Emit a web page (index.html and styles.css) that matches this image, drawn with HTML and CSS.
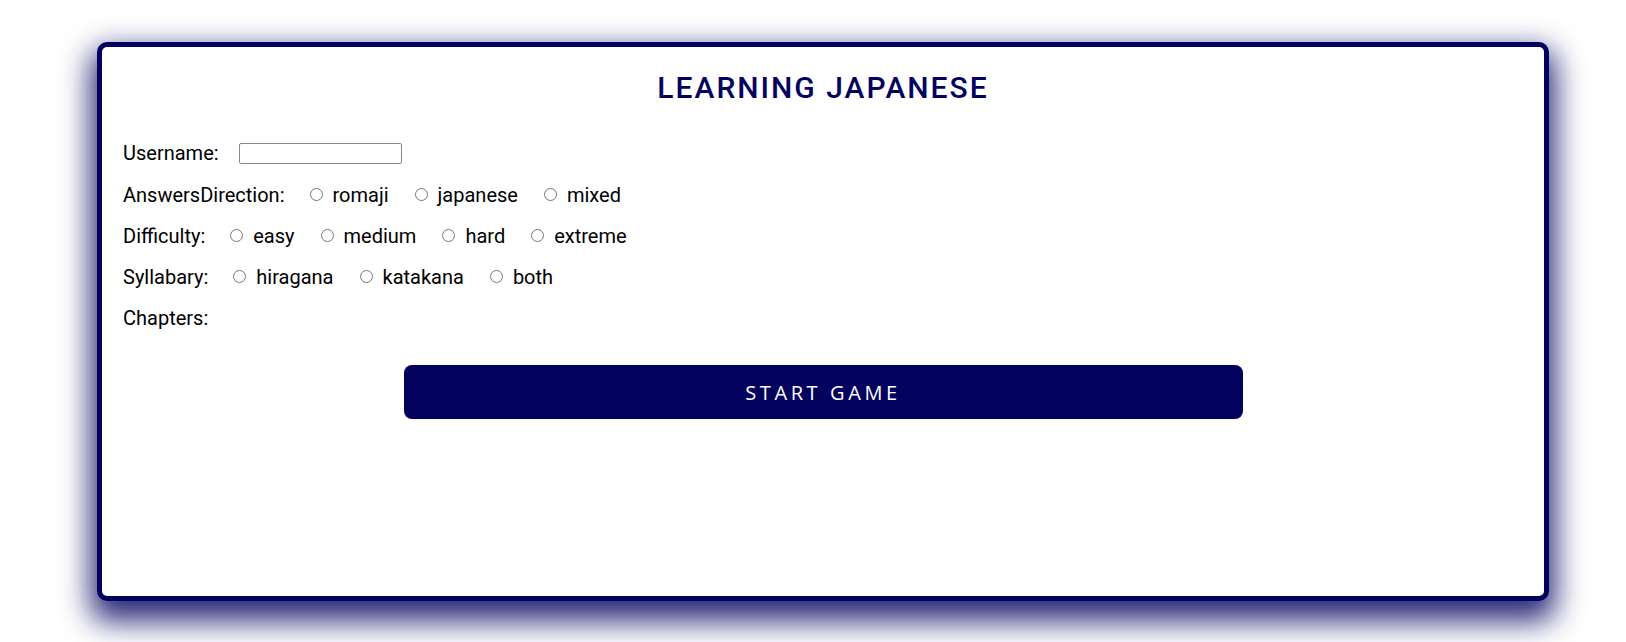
FILE: index.html
```html
<!DOCTYPE html>
<html lang="en">
<head>
<meta charset="utf-8">
<title>Learning Japanese</title>
<link rel="stylesheet" href="styles.css">
</head>
<body>
<div class="card">
  <h1 class="title">LEARNING JAPANESE</h1>
  <form class="form">
    <div class="row row-user">
      <label class="label" for="username">Username:</label>
      <input class="text-input" id="username" type="text">
    </div>
    <div class="row">
      <span class="label">AnswersDirection:</span>
      <label class="opt"><input class="radio" type="radio" name="dir"><span>romaji</span></label>
      <label class="opt"><input class="radio" type="radio" name="dir"><span>japanese</span></label>
      <label class="opt"><input class="radio" type="radio" name="dir"><span>mixed</span></label>
    </div>
    <div class="row">
      <span class="label">Difficulty:</span>
      <label class="opt"><input class="radio" type="radio" name="diff"><span>easy</span></label>
      <label class="opt"><input class="radio" type="radio" name="diff"><span>medium</span></label>
      <label class="opt"><input class="radio" type="radio" name="diff"><span>hard</span></label>
      <label class="opt"><input class="radio" type="radio" name="diff"><span>extreme</span></label>
    </div>
    <div class="row">
      <span class="label">Syllabary:</span>
      <label class="opt"><input class="radio" type="radio" name="syl"><span>hiragana</span></label>
      <label class="opt"><input class="radio" type="radio" name="syl"><span>katakana</span></label>
      <label class="opt"><input class="radio" type="radio" name="syl"><span>both</span></label>
    </div>
    <div class="row">
      <span class="label">Chapters:</span>
    </div>
    <div class="actions">
      <button class="start" type="button">START GAME</button>
    </div>
  </form>
</div>
</body>
</html>
```
FILE: styles.css
```css
html {
  margin: 0;
  padding: 0;
  background: #ffffff;
}
body {
  margin: 0;
  padding: 42px 0 41px 97px;
  min-height: 642px;
  box-sizing: border-box;
  font-family: Roboto, "Liberation Sans", sans-serif;
}
.card {
  box-sizing: border-box;
  width: 1452px;
  height: 559px;
  border: 5px solid #03035f;
  border-radius: 10px;
  background: #ffffff;
  box-shadow: 0 14px 30px 6px rgba(3, 3, 96, 0.85);
  padding: 23px 21px 0 21px;
}
.title {
  margin: 0;
  text-align: center;
  font-family: Roboto, "Liberation Sans", sans-serif;
  font-weight: 500;
  font-size: 30px;
  line-height: 35px;
  letter-spacing: 2px;
  color: #03035f;
}
.form {
  margin-top: 32px;
}
.row {
  display: flex;
  align-items: center;
  height: 31px;
  margin-bottom: 10px;
  font-size: 20px;
  color: #000;
}
.row-user {
  height: 32px;
}
.label {
  margin-right: 20px;
}
.text-input {
  box-sizing: border-box;
  width: 163px;
  height: 21px;
  margin: 0;
  border: 1px solid #8a8a8a;
  border-radius: 2px;
  padding: 0 4px;
}
.opt {
  display: flex;
  align-items: center;
  margin-right: 21px;
}
.radio {
  width: 13px;
  height: 13px;
  margin: 0 10px 0 5px;
}
.actions {
  display: flex;
  justify-content: center;
  margin-top: 32px;
}
.start {
  width: 839px;
  height: 54px;
  border: none;
  border-radius: 8px;
  background: #03035f;
  color: #ffffff;
  font-family: "Open Sans", "Noto Sans", sans-serif;
  font-size: 20px;
  letter-spacing: 3.6px;
  cursor: pointer;
}
```
